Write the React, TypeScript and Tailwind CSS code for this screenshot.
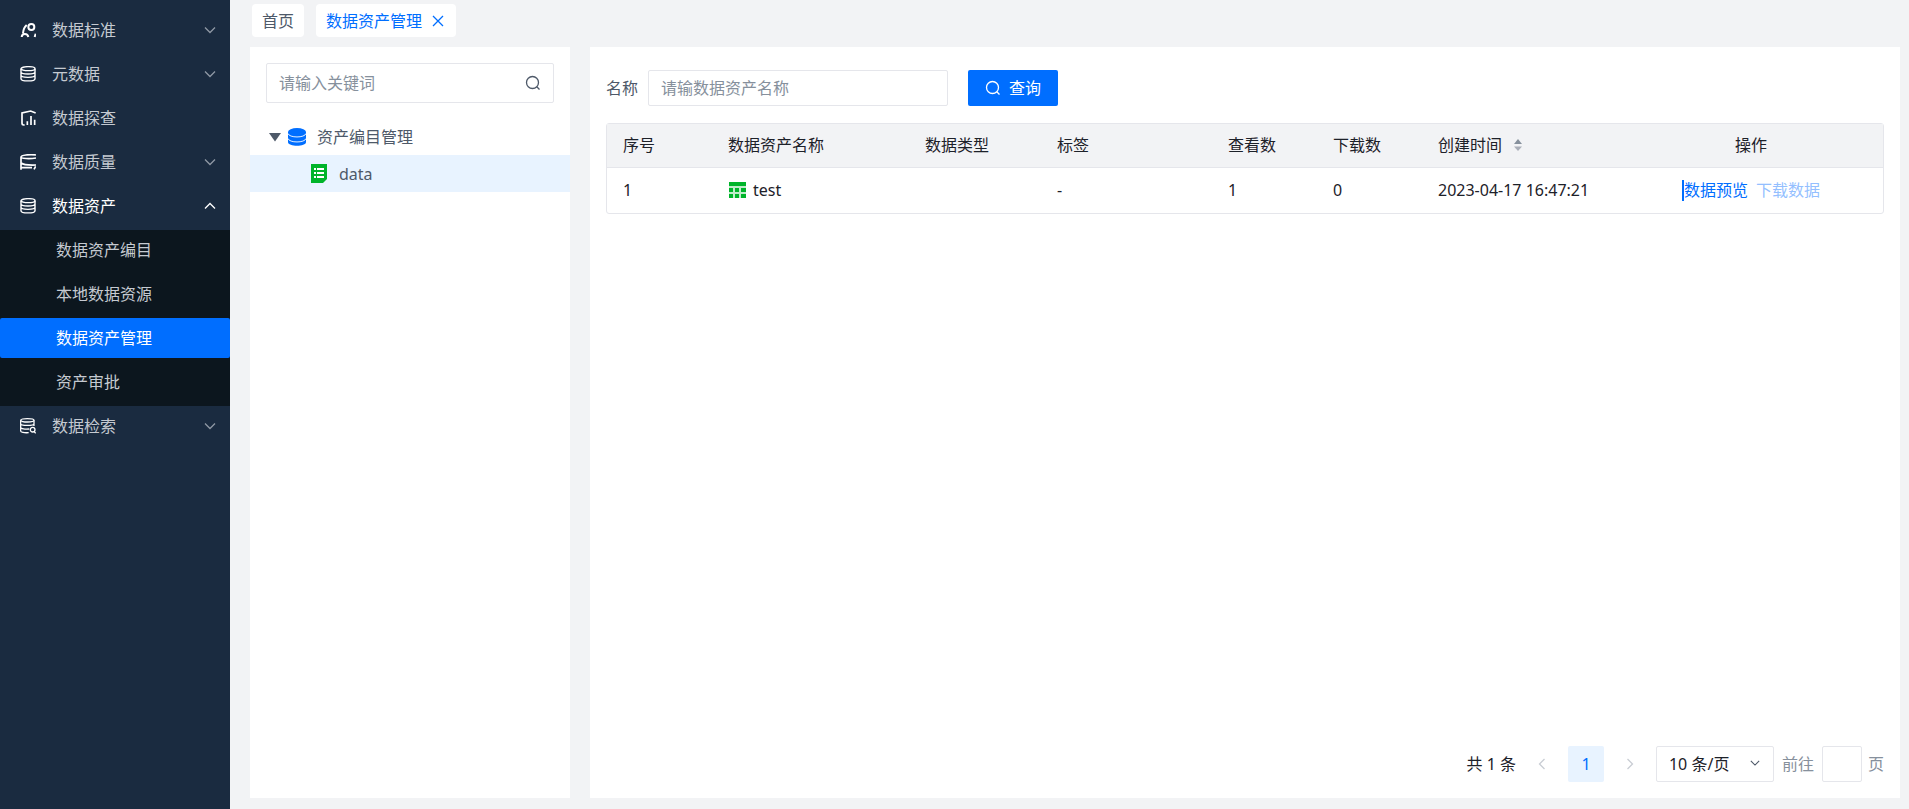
import { useState } from "react";
import type { ReactNode } from "react";

function StandardIcon() {
  return (
    <svg className="h-4 w-4" viewBox="0 0 48 48" fill="none" stroke="currentColor" strokeWidth={6}>
      <circle cx="34" cy="15" r="9" />
      <path d="M20 9C14 14 10 22 9 34M5 45c1-12 18-12 20 0M47 35l-3 10" />
    </svg>
  );
}

function DatabaseIcon() {
  return (
    <svg className="h-4 w-4" viewBox="0 0 48 48" fill="none" stroke="currentColor" strokeWidth={4.2}>
      <ellipse cx="24" cy="8" rx="21" ry="6" />
      <path d="M3 8v30c0 9 42 9 42 0V8M3 18c0 8 42 8 42 0M3 28c0 8 42 8 42 0" />
    </svg>
  );
}

function ExploreIcon() {
  return (
    <svg className="h-4 w-4" viewBox="0 0 48 48" fill="none" stroke="currentColor" strokeWidth={5}>
      <path d="M14 45H11a5 5 0 0 1-5-5V9l26-6 15 6" />
      <path d="M22 45V34M33 45V18M44 45V29" />
    </svg>
  );
}

function QualityIcon() {
  return (
    <svg className="h-4 w-4" viewBox="0 0 48 48" fill="none" stroke="currentColor" strokeWidth={5}>
      <path d="M48 3C28 0 3 4 3 9s26 6 45 3M3 9v38M3 27c8 6 20 7 45 6M3 41h33M47 37l-5 9" />
    </svg>
  );
}

function RetrievalIcon() {
  return (
    <svg className="h-4 w-4" viewBox="0 0 48 48" fill="none" stroke="currentColor" strokeWidth={3.8}>
      <ellipse cx="22" cy="7" rx="20" ry="5" />
      <path d="M2 7v32c0 4 10 6 24 5M42 7v17M2 17c0 7 40 7 40 0M2 28c0 5 14 6 26 5" />
      <circle cx="38" cy="35" r="7" />
      <path d="M42 40l5 6" />
    </svg>
  );
}

function Chevron({ className }: { className: string }) {
  return (
    <svg className={className} viewBox="0 0 12 12" fill="none" stroke="currentColor" strokeWidth={1.3}>
      <path d="M1 3.5l5 5 5-5" />
    </svg>
  );
}

function SearchIcon() {
  return (
    <svg className="h-4 w-4 shrink-0" viewBox="0 0 16 16" fill="none" stroke="currentColor" strokeWidth={1.3}>
      <circle cx="7.5" cy="7.5" r="6" />
      <path d="M11.8 11.8l2.7 2.7" />
    </svg>
  );
}

interface MenuItem {
  label: string;
  icon: ReactNode;
  expandable?: boolean;
  children?: string[];
}

const menu: MenuItem[] = [
  { label: "数据标准", icon: <StandardIcon />, expandable: true },
  { label: "元数据", icon: <DatabaseIcon />, expandable: true },
  { label: "数据探查", icon: <ExploreIcon /> },
  { label: "数据质量", icon: <QualityIcon />, expandable: true },
  {
    label: "数据资产",
    icon: <DatabaseIcon />,
    expandable: true,
    children: ["数据资产编目", "本地数据资源", "数据资产管理", "资产审批"],
  },
  { label: "数据检索", icon: <RetrievalIcon />, expandable: true },
];

function Sidebar() {
  const active = "数据资产管理";

  return (
    <nav className="w-[230px] shrink-0 bg-[#1a2b40] pt-2.5 text-[#c5cad1]">
      {menu.map((item) => (
        <div key={item.label}>
          <button
            type="button"
            className={`mb-1 flex h-10 w-full items-center pr-3.5 pl-5 ${item.children ? "text-white" : ""}`}
          >
            <span className="mr-4 text-white">{item.icon}</span>
            <span className="flex-1 text-left">{item.label}</span>
            {item.expandable && (
              <Chevron className={item.children ? "h-3 w-3 rotate-180" : "h-3 w-3 text-[#8f98a4]"} />
            )}
          </button>
          {item.children && (
            <div className="flow-root bg-[#0c161e]">
              {item.children.map((child) => (
                <a
                  key={child}
                  href="#"
                  className={`mb-1 flex h-10 items-center rounded-xs pl-14 ${
                    child === active ? "bg-[#006eff] text-white" : ""
                  }`}
                >
                  {child}
                </a>
              ))}
            </div>
          )}
        </div>
      ))}
    </nav>
  );
}

function Tabs() {
  return (
    <div className="flex gap-3 px-0.5 pt-1 pb-2.5">
      <a href="#" className="flex h-[33px] items-center rounded bg-white px-2.5">
        首页
      </a>
      <div className="flex h-[33px] items-center gap-2.5 rounded bg-white pr-3 pl-2.5 text-[#006eff]">
        <a href="#">数据资产管理</a>
        <button type="button" aria-label="关闭">
          <svg className="h-3 w-3" viewBox="0 0 12 12" fill="none" stroke="currentColor" strokeWidth={1.3}>
            <path d="M1 1l10 10M11 1L1 11" />
          </svg>
        </button>
      </div>
    </div>
  );
}

function CatalogTree() {
  return (
    <aside className="w-80 shrink-0 bg-white pt-4">
      <div className="mx-4 mb-4 flex h-10 items-center rounded-xs border border-[#e5e6eb] px-3">
        <input
          type="text"
          aria-label="关键词"
          placeholder="请输入关键词"
          className="min-w-0 flex-1 outline-none placeholder:text-[#86909c]"
        />
        <button type="button" aria-label="搜索">
          <SearchIcon />
        </button>
      </div>
      <ul>
        <li>
          <div className="flex h-9 items-center pl-[19px]">
            <svg className="mr-[7px] h-3 w-3" viewBox="0 0 12 12" fill="#4e5969">
              <path d="M0 2h12l-6 8.5z" />
            </svg>
            <svg className="mr-[11px] h-[18px] w-[18px]" viewBox="0 0 18 18">
              <path d="M0 4v10c0 5 18 5 18 0V4z" fill="#006eff" />
              <ellipse cx="9" cy="4" rx="9" ry="4" fill="#006eff" />
              <path d="M0 5.5c1 4.6 17 4.6 18 0M0 10.5c1 4.6 17 4.6 18 0" fill="none" stroke="#fff" strokeWidth={0.9} />
            </svg>
            资产编目管理
          </div>
          <ul>
            <li className="flex h-[37px] items-center bg-[#e8f3ff] pl-[61px]">
              <svg className="mr-3 h-[19px] w-4" viewBox="0 0 16 19">
                <path d="M0 0h16v15l-4 4H0z" fill="#00b42a" />
                <path d="M3 5h2M3 9h2M3 13h2M6 5h7M6 9h7M6 13h7" stroke="#fff" strokeWidth={1.8} />
              </svg>
              data
            </li>
          </ul>
        </li>
      </ul>
    </aside>
  );
}

const rows = [
  { id: 1, name: "test", type: "", tag: "-", views: 1, downloads: 0, created: "2023-04-17 16:47:21" },
];

function AssetTable() {
  return (
    <div className="rounded-[3px] border border-[#e5e6eb]">
      <table className="w-full table-fixed text-left text-[#1d2129]">
        <colgroup>
          <col className="w-[105px]" />
          <col className="w-[197px]" />
          <col className="w-[132px]" />
          <col className="w-[171px]" />
          <col className="w-[105px]" />
          <col className="w-[105px]" />
          <col className="w-[197px]" />
          <col className="w-[264px]" />
        </colgroup>
        <thead>
          <tr className="h-[43px] border-b border-[#e5e6eb] bg-[#f2f3f5] *:px-4 *:font-normal">
            <th>序号</th>
            <th>数据资产名称</th>
            <th>数据类型</th>
            <th>标签</th>
            <th>查看数</th>
            <th>下载数</th>
            <th>
              <button type="button" className="flex items-center gap-3">
                创建时间
                <svg className="h-3 w-2" viewBox="0 0 8 12">
                  <path d="M0 5L4 0l4 5z" fill="#86909c" />
                  <path d="M0 7.5L4 12l4-4.5z" fill="#a9aeb8" />
                </svg>
              </button>
            </th>
            <th className="text-center">操作</th>
          </tr>
        </thead>
        <tbody>
          {rows.map((row) => (
            <tr key={row.id} className="h-[46px] *:px-4">
              <td>{row.id}</td>
              <td>
                <div className="flex items-center gap-[7px] pl-px">
                  <svg className="h-4 w-[17px]" viewBox="0 0 17 16" fill="#00b42a">
                    <path d="M0 0h17v16H0z" opacity={0.25} />
                    <path d="M0 0h17v4H0zM0 6h4v4H0zM6 6h4v4H6zM12 6h5v4h-5zM0 12h4v4H0zM6 12h4v4H6zM12 12h5v4h-5z" />
                  </svg>
                  {row.name}
                </div>
              </td>
              <td>{row.type}</td>
              <td>{row.tag}</td>
              <td>{row.views}</td>
              <td>{row.downloads}</td>
              <td className="whitespace-nowrap">{row.created}</td>
              <td>
                <div className="flex justify-center gap-2 leading-[21px]">
                  <button type="button" className="border-l-2 border-[#006eff] text-[#006eff]">
                    数据预览
                  </button>
                  <button type="button" disabled className="text-[#94bfff]">
                    下载数据
                  </button>
                </div>
              </td>
            </tr>
          ))}
        </tbody>
      </table>
    </div>
  );
}

function Pagination() {
  const [size, setSize] = useState("10");

  return (
    <div className="mt-auto flex items-center justify-end text-[#86909c]">
      <span className="mr-2 text-[#1d2129]">共 1 条</span>
      <button type="button" disabled aria-label="上一页" className="flex h-9 w-9 items-center justify-center text-[#c9cdd4]">
        <Chevron className="h-3 w-3 rotate-90" />
      </button>
      <button type="button" className="mx-2 h-9 w-9 rounded-xs bg-[#e8f3ff] text-[#006eff]">
        1
      </button>
      <button type="button" disabled aria-label="下一页" className="flex h-9 w-9 items-center justify-center text-[#c9cdd4]">
        <Chevron className="h-3 w-3 -rotate-90" />
      </button>
      <div className="relative mr-2 ml-2">
        <select
          aria-label="每页条数"
          value={size}
          onChange={(e) => setSize(e.target.value)}
          className="h-9 w-[118px] appearance-none rounded-xs border border-[#e5e6eb] bg-white pl-3 text-[#1d2129]"
        >
          <option value="10">10 条/页</option>
          <option value="20">20 条/页</option>
          <option value="50">50 条/页</option>
        </select>
        <Chevron className="pointer-events-none absolute top-3 right-3.5 h-2.5 w-2.5 text-[#4e5969]" />
      </div>
      <label htmlFor="goto">前往</label>
      <input id="goto" type="text" className="mr-1.5 ml-2 h-9 w-10 rounded-xs border border-[#e5e6eb] text-center" />
      <span>页</span>
    </div>
  );
}

export default function App() {
  return (
    <div className="flex min-h-screen bg-[#f2f3f5] font-['Noto_Sans','Noto_Sans_CJK_SC',sans-serif] text-base text-[#4e5969]">
      <Sidebar />
      <div className="flex min-w-0 flex-1 flex-col pr-[9px] pb-[11px] pl-5">
        <Tabs />
        <div className="flex flex-1 gap-5">
          <CatalogTree />
          <main className="flex min-w-0 flex-1 flex-col bg-white px-4 pt-[23px] pb-4">
            <form className="mb-[17px] flex items-center" onSubmit={(e) => e.preventDefault()}>
              <label htmlFor="asset-name" className="mr-2.5">
                名称
              </label>
              <input
                id="asset-name"
                type="text"
                placeholder="请输数据资产名称"
                className="mr-5 h-9 w-[300px] rounded-xs border border-[#e5e6eb] px-3 outline-none placeholder:text-[#86909c]"
              />
              <button
                type="submit"
                className="flex h-9 w-[90px] items-center justify-center gap-2 rounded-xs bg-[#006eff] text-white"
              >
                <SearchIcon />
                查询
              </button>
            </form>
            <AssetTable />
            <Pagination />
          </main>
        </div>
      </div>
    </div>
  );
}
